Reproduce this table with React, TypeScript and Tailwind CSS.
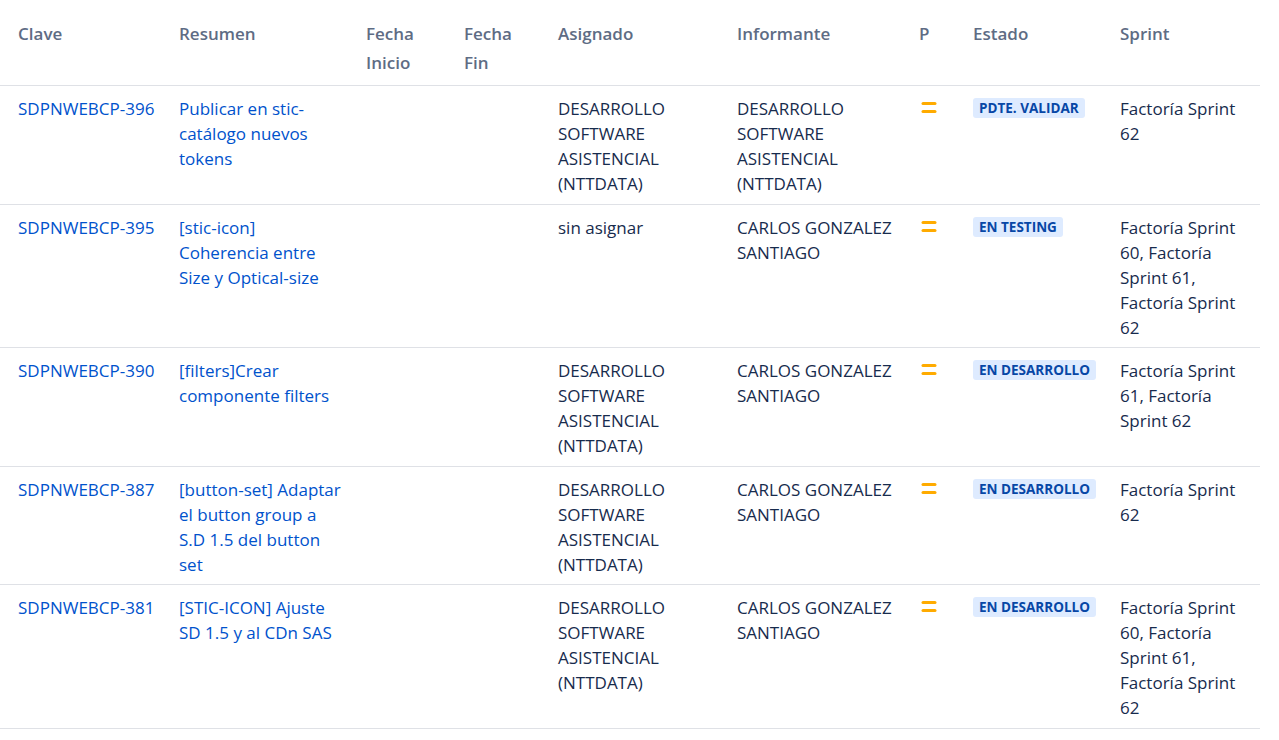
import React from "react";

type Row = {
  key: string;
  summary: string[];
  assignee: string[];
  reporter: string[];
  status: string;
  sprint: string[];
};

const DEV = ["DESARROLLO", "SOFTWARE", "ASISTENCIAL", "(NTTDATA)"];
const CARLOS = ["CARLOS GONZALEZ", "SANTIAGO"];

const rows: Row[] = [
  {
    key: "SDPNWEBCP-396",
    summary: ["Publicar en stic-", "catálogo nuevos", "tokens"],
    assignee: DEV,
    reporter: DEV,
    status: "PDTE. VALIDAR",
    sprint: ["Factoría Sprint", "62"],
  },
  {
    key: "SDPNWEBCP-395",
    summary: ["[stic-icon]", "Coherencia entre", "Size y Optical-size"],
    assignee: ["sin asignar"],
    reporter: CARLOS,
    status: "EN TESTING",
    sprint: ["Factoría Sprint", "60, Factoría", "Sprint 61,", "Factoría Sprint", "62"],
  },
  {
    key: "SDPNWEBCP-390",
    summary: ["[filters]Crear", "componente filters"],
    assignee: DEV,
    reporter: CARLOS,
    status: "EN DESARROLLO",
    sprint: ["Factoría Sprint", "61, Factoría", "Sprint 62"],
  },
  {
    key: "SDPNWEBCP-387",
    summary: ["[button-set] Adaptar", "el button group a", "S.D 1.5 del button", "set"],
    assignee: DEV,
    reporter: CARLOS,
    status: "EN DESARROLLO",
    sprint: ["Factoría Sprint", "62"],
  },
  {
    key: "SDPNWEBCP-381",
    summary: ["[STIC-ICON] Ajuste", "SD 1.5 y al CDn SAS"],
    assignee: DEV,
    reporter: CARLOS,
    status: "EN DESARROLLO",
    sprint: ["Factoría Sprint", "60, Factoría", "Sprint 61,", "Factoría Sprint", "62"],
  },
];

const grid =
  "grid grid-cols-[171px_187px_98px_94px_179px_182px_54px_147px_148px] w-[1260px]";

function Lines({ lines }: { lines: string[] }) {
  return (
    <>
      {lines.map((l, i) => (
        <span key={i} className="block whitespace-nowrap">
          {l}
        </span>
      ))}
    </>
  );
}

function Priority() {
  return (
    <svg width="16" height="12" viewBox="0 0 16 12" className="block mt-[6px] ml-[2px]">
      <rect x="0.5" y="0" width="15" height="3" rx="1.5" fill="#FFAB00" />
      <rect x="0.5" y="8" width="15" height="3" rx="1.5" fill="#FFAB00" />
    </svg>
  );
}

export default function App() {
  return (
    <div
      className="bg-white min-h-[740px] w-[1279px] text-[17px] leading-[25px] text-[#172b4d]"
      style={{ fontFamily: '"Open Sans", "Noto Sans", sans-serif' }}
    >
      <div className={`${grid} border-b border-[#dfe1e6] font-semibold text-[#5e6c84] leading-[29px] pt-[19px] pb-[8px]`}>
        <div className="pl-[18px]">Clave</div>
        <div className="pl-[8px]">Resumen</div>
        <div className="pl-[8px]">
          <Lines lines={["Fecha", "Inicio"]} />
        </div>
        <div className="pl-[8px]">
          <Lines lines={["Fecha", "Fin"]} />
        </div>
        <div className="pl-[8px]">Asignado</div>
        <div className="pl-[8px]">Informante</div>
        <div className="pl-[8px]">P</div>
        <div className="pl-[8px]">Estado</div>
        <div className="pl-[8px]">Sprint</div>
      </div>
      {rows.map((r) => (
        <div key={r.key} className={`${grid} border-b border-[#dfe1e6] pt-[10px] pb-[7.5px]`}>
          <div className="pl-[18px] text-[#0052cc]">{r.key}</div>
          <div className="pl-[8px] text-[#0052cc]">
            <Lines lines={r.summary} />
          </div>
          <div className="pl-[8px]" />
          <div className="pl-[8px]" />
          <div className="pl-[8px]">
            <Lines lines={r.assignee} />
          </div>
          <div className="pl-[8px]">
            <Lines lines={r.reporter} />
          </div>
          <div className="pl-[8px]">
            <Priority />
          </div>
          <div className="pl-[8px]">
            <span className="inline-block mt-[2px] rounded-[3px] bg-[#deebff] px-[6px] text-[13.5px] leading-[20px] font-bold text-[#0747a6] align-top">
              {r.status}
            </span>
          </div>
          <div className="pl-[8px]">
            <Lines lines={r.sprint} />
          </div>
        </div>
      ))}
    </div>
  );
}
